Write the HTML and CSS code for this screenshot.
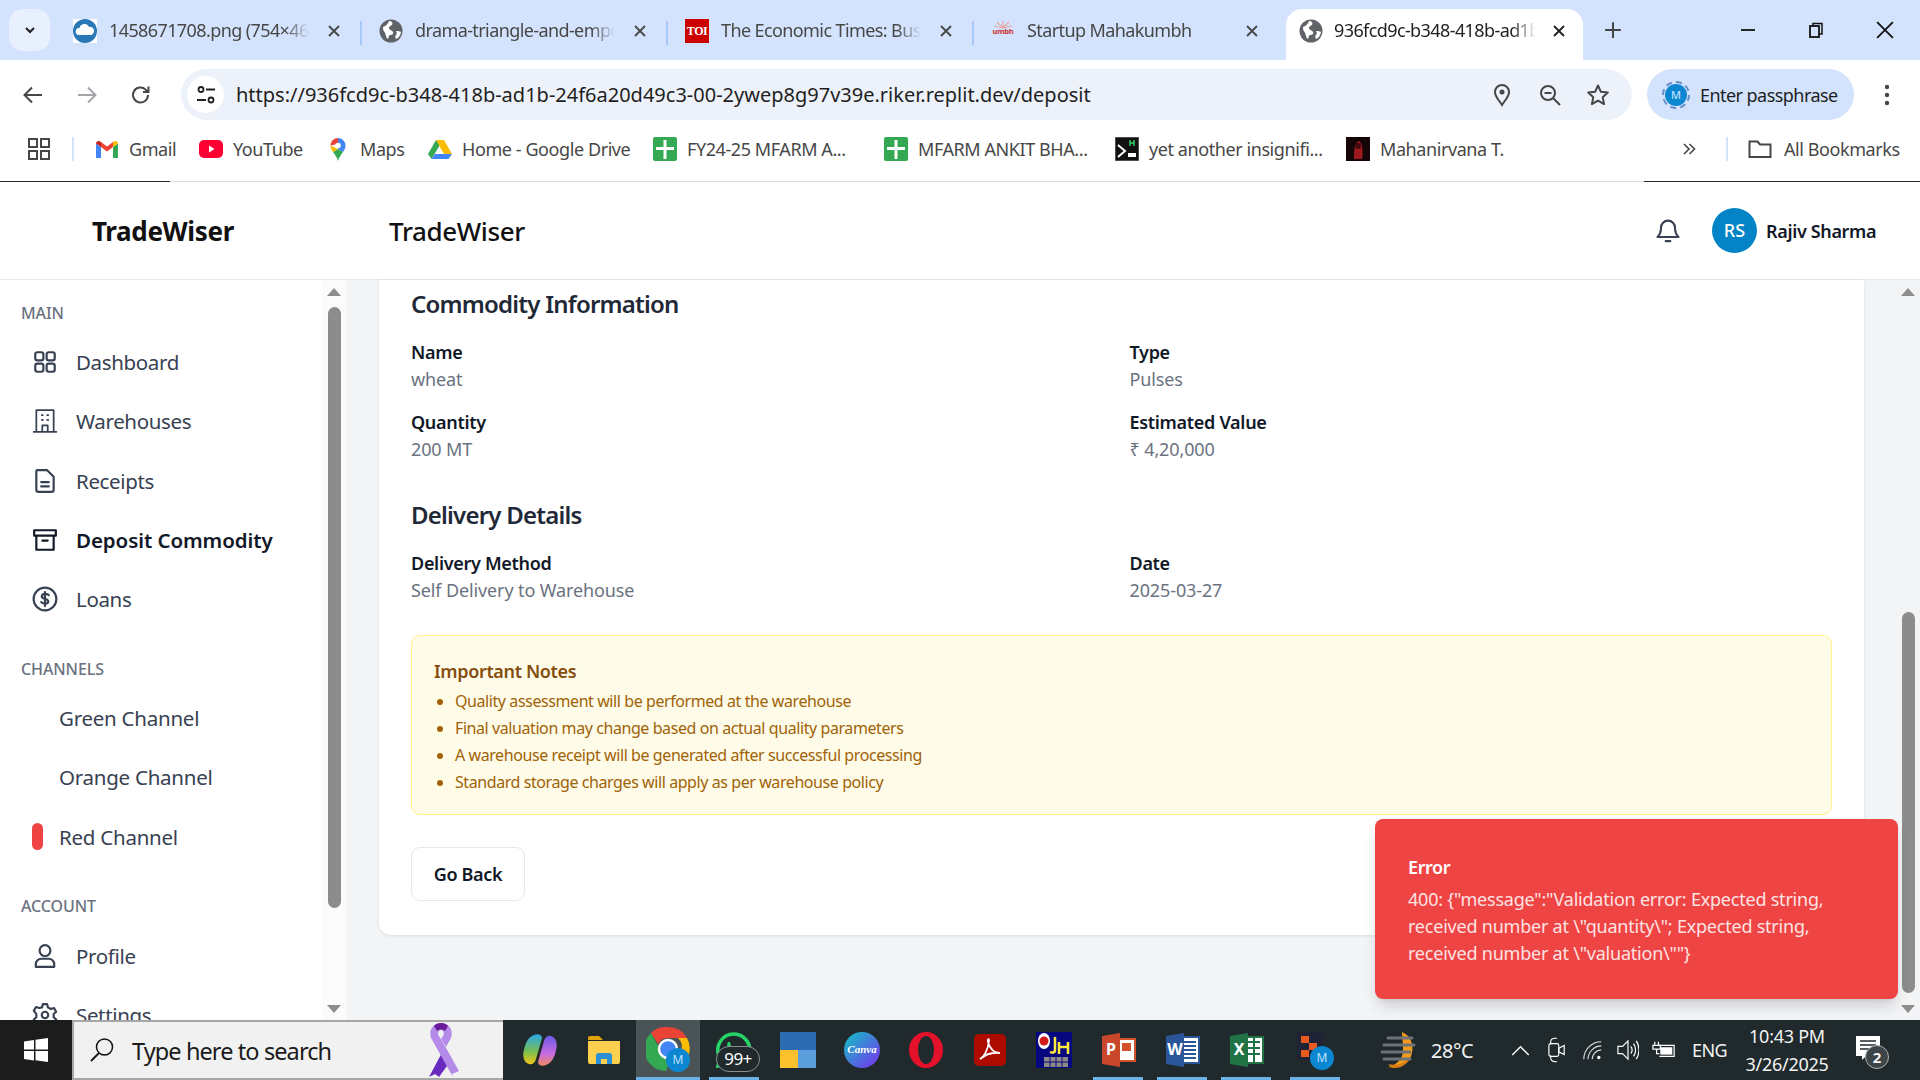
FILE: index.html
```html
<!DOCTYPE html>
<html lang="en">
<head>
<meta charset="utf-8">
<title>TradeWiser</title>
<link rel="stylesheet" href="styles.css">
</head>
<body>
<svg class="defs" aria-hidden="true">
  <symbol id="globe" viewBox="0 0 24 24"><circle cx="12" cy="12" r="11.5" fill="#5f6368"/><path fill="#fff" d="M4 8c3-1 5-3 6-6 3 0 4 2 3 4-1 1-3 1-3 3s3 2 4 4-1 3-3 3c-2 1-1 3-2 4-2-1-2-4-3-6S4 12 4 8zM17 12c2 0 4 0 5 1-.5 3-2 6-5 7-1-2-1-3 0-4s1-3 0-4z"/></symbol>
  <symbol id="x" viewBox="0 0 16 16"><path d="M3 3l10 10M13 3L3 13" fill="none" stroke="currentColor" stroke-width="1.8"/></symbol>
  <symbol id="sheet" viewBox="0 0 24 24"><rect width="24" height="24" rx="2" fill="#34a853"/><path d="M10.500 3h3v7H21v3h-7.500v9h-3v-9H3v-3h7.500z" fill="#fff"/></symbol>
</svg>

<header class="tabstrip">
  <button class="tab-menu"><svg class="ic-12" viewBox="0 0 12 12"><path d="M2 4l4 4 4-4" fill="none" stroke="#1f1f1f" stroke-width="2"/></svg></button>
  <div class="tab">
    <svg class="fav" viewBox="0 0 24 24"><rect width="24" height="24" fill="#fff"/><circle cx="12" cy="12" r="12" fill="#2a78b5"/><path d="M6 16a3.500 3.500 0 0 1 .5-7 5 5 0 0 1 9.500-1 4 4 0 0 1 2 8z" fill="#fff"/></svg>
    <span class="tab-text">1458671708.png (754×462)</span>
    <svg class="tab-x"><use href="#x"/></svg>
  </div>
  <div class="tab">
    <svg class="fav"><use href="#globe"/></svg>
    <span class="tab-text">drama-triangle-and-empowerment</span>
    <svg class="tab-x"><use href="#x"/></svg>
  </div>
  <div class="tab">
    <span class="toi">TOI</span>
    <span class="tab-text">The Economic Times: Business</span>
    <svg class="tab-x"><use href="#x"/></svg>
  </div>
  <div class="tab tab-plain">
    <svg class="fav" viewBox="0 0 24 24"><path d="M12 9V2M12 9L6 3M12 9l6-6M12 9L3 7M12 9l9-2" stroke="#e6a79f" stroke-width="1.200"/><text x="12" y="15" text-anchor="middle" class="umbh">umbh</text></svg>
    <span class="tab-text">Startup Mahakumbh</span>
    <svg class="tab-x"><use href="#x"/></svg>
  </div>
  <div class="tab tab-active">
    <svg class="fav"><use href="#globe"/></svg>
    <span class="tab-text">936fcd9c-b348-418b-ad1b-24f6a20d49c3</span>
    <svg class="tab-x"><use href="#x"/></svg>
  </div>
  <svg class="new-tab" viewBox="0 0 16 16"><path d="M8 1v14M1 8h14" stroke="#444746" stroke-width="1.800"/></svg>
  <div class="win-btns">
    <svg class="win-ic" viewBox="0 0 16 16"><path d="M1 8h14" stroke="#111" stroke-width="1.800"/></svg>
    <svg class="win-ic" viewBox="0 0 16 16"><path d="M5 4V1.500h9V12h-3" fill="none" stroke="#111" stroke-width="1.500"/><rect x="2" y="4" width="9" height="11" fill="none" stroke="#111" stroke-width="1.800"/></svg>
    <svg class="win-ic win-close" viewBox="0 0 16 16"><path d="M1 1l14 14M15 1L1 15" stroke="#111" stroke-width="1.600"/></svg>
  </div>
</header>

<nav class="toolbar">
  <div class="nav-btns">
    <svg class="tb-ic" viewBox="0 0 24 24"><path d="M21 12H4M11 4.500L3.500 12l7.500 7.500" fill="none" stroke="#444746" stroke-width="2"/></svg>
    <svg class="tb-ic" viewBox="0 0 24 24"><path d="M3 12h17M13 4.500l7.500 7.500-7.500 7.500" fill="none" stroke="#a3a5a8" stroke-width="2"/></svg>
    <svg class="tb-ic" viewBox="0 0 24 24"><path d="M19 12a7.500 7.500 0 1 1-2.300-5.400L19 9M19.500 3.500V9H14" fill="none" stroke="#444746" stroke-width="2"/></svg>
  </div>
  <div class="omnibox">
    <span class="site-btn"><svg class="ic-22" viewBox="0 0 22 22"><circle cx="6" cy="5.500" r="2.500" fill="none" stroke="#1f1f1f" stroke-width="1.800"/><path d="M11 5.500h9M2 16h9" stroke="#1f1f1f" stroke-width="1.800"/><circle cx="16" cy="16" r="2.500" fill="none" stroke="#1f1f1f" stroke-width="1.800"/></svg></span>
    <span class="url">https://936fcd9c-b348-418b-ad1b-24f6a20d49c3-00-2ywep8g97v39e.riker.replit.dev/deposit</span>
    <svg class="omni-ic" viewBox="0 0 24 24"><path d="M12 22c-3-5-7-8-7-13a7 7 0 0 1 14 0c0 5-4 8-7 13z" fill="none" stroke="#444746" stroke-width="2"/><circle cx="12" cy="9" r="2.500" fill="#444746"/></svg>
    <svg class="omni-ic" viewBox="0 0 24 24"><circle cx="10" cy="10" r="7" fill="none" stroke="#444746" stroke-width="2"/><path d="M15 15l7 7M6.500 10h7" stroke="#444746" stroke-width="2"/></svg>
    <svg class="omni-ic" viewBox="0 0 24 24"><path d="M12 2.500l2.900 6.300 6.900.8-5.100 4.700 1.400 6.800-6.100-3.400-6.100 3.400 1.400-6.800-5.100-4.700 6.900-.8z" fill="none" stroke="#444746" stroke-width="2" stroke-linejoin="round"/></svg>
  </div>
  <div class="passphrase">
    <span class="ring"><span class="avatar-m">M</span></span>
    <span>Enter passphrase</span>
  </div>
  <svg class="kebab" viewBox="0 0 6 24"><circle cx="3" cy="4" r="2.200" fill="#444746"/><circle cx="3" cy="12" r="2.200" fill="#444746"/><circle cx="3" cy="20" r="2.200" fill="#444746"/></svg>
</nav>

<div class="bookmarks">
  <svg class="apps" viewBox="0 0 22 22"><g fill="none" stroke="#444746" stroke-width="2"><rect x="1" y="1" width="8" height="8"/><rect x="13" y="1" width="8" height="8"/><rect x="1" y="13" width="8" height="8"/><rect x="13" y="13" width="8" height="8"/></g></svg>
  <span class="bm-sep"></span>
  <div class="bm-list">
    <a class="bm bm-gmail"><svg class="bm-ic" viewBox="0 0 24 24"><path fill="#4285f4" d="M1 6.500V21h5V10z"/><path fill="#34a853" d="M18 10v11h5V6.500z"/><path fill="#ea4335" d="M6 10v-5l6 4.500L18 5v5l-6 4.500z"/><path fill="#c5221f" d="M1 6.500C1 4 4 3 6 5v5z"/><path fill="#fbbc04" d="M23 6.500C23 4 20 3 18 5v5z"/></svg><span>Gmail</span></a>
    <a class="bm bm-yt"><svg class="bm-ic" viewBox="0 0 24 24"><rect y="3" width="24" height="18" rx="5" fill="#ff0033"/><path d="M10 8.500l5.500 3.500-5.500 3.500z" fill="#fff"/></svg><span>YouTube</span></a>
    <a class="bm bm-maps"><svg class="bm-ic" viewBox="0 0 24 24"><path fill="#34a853" d="M12 24c-1-4-3-6-5-9l5-3 5 3c-2 3-4 5-5 9z"/><path fill="#fbbc04" d="M7 15C5 12 4.500 11 4.500 8.500L12 12z"/><path fill="#4285f4" d="M12 1a7.500 7.500 0 0 1 7.500 7.500c0 2.500-.5 3.500-2.500 6.500l-5-3z"/><path fill="#ea4335" d="M4.500 8.500A7.500 7.500 0 0 1 12 1v6z"/><circle cx="12" cy="8.500" r="2.800" fill="#fff"/></svg><span>Maps</span></a>
    <a class="bm bm-drive"><svg class="bm-ic" viewBox="0 0 24 24"><path fill="#34a853" d="M8 3L0 17l3.500 5L12 8z"/><path fill="#fbbc04" d="M8 3h8l8 14h-8z"/><path fill="#4285f4" d="M3.500 22h17L24 17H7z"/></svg><span>Home - Google Drive</span></a>
    <a class="bm bm-long"><svg class="bm-ic"><use href="#sheet"/></svg><span>FY24-25 MFARM A...</span></a>
    <a class="bm bm-long"><svg class="bm-ic"><use href="#sheet"/></svg><span>MFARM ANKIT BHA...</span></a>
    <a class="bm bm-long"><svg class="bm-ic" viewBox="0 0 24 24"><rect width="24" height="24" fill="#111" stroke="#889" stroke-width="1"/><path d="M3 8l7 6-7 6" fill="none" stroke="#fff" stroke-width="2"/><rect x="13" y="16" width="8" height="4" fill="#fff"/><path d="M15 3v6M19 3v6M15 6h4" stroke="#3c6" stroke-width="1.500"/></svg><span>yet another insignifi...</span></a>
    <a class="bm"><svg class="bm-ic" viewBox="0 0 24 24"><rect width="24" height="24" fill="#150506"/><path d="M8 22c0-8 0-16 5-18 4 3 4 11 3 18z" fill="#9c1a1e"/><circle cx="12" cy="9" r="3" fill="#43090b"/></svg><span>Mahanirvana T.</span></a>
  </div>
  <svg class="bm-more" viewBox="0 0 14 14"><path d="M2 2l5 5-5 5M7.500 2l5 5-5 5" fill="none" stroke="#444746" stroke-width="1.600"/></svg>
  <span class="bm-sep bm-sep2"></span>
  <a class="bm bm-all"><svg class="bm-ic" viewBox="0 0 24 24"><path d="M1.500 20V4.500h8l2.500 3h10.500V20z" fill="none" stroke="#444746" stroke-width="2"/></svg><span>All Bookmarks</span></a>
</div>
<div class="chrome-line"><i></i><b></b><i></i></div>

<div class="app">
  <div class="app-header">
    <div class="brand">TradeWiser</div>
    <div class="page-brand">TradeWiser</div>
    <svg class="bell" viewBox="0 0 24 24"><path d="M6 10a6 6 0 0 1 12 0c0 5 2 7 3 8H3c1-1 3-3 3-8zM10 21.500h4" fill="none" stroke="#374151" stroke-width="1.800" stroke-linejoin="round" stroke-linecap="round"/></svg>
    <div class="avatar">RS</div>
    <div class="user">Rajiv Sharma</div>
  </div>
  <div class="app-body">
    <aside class="sidebar">
      <div class="side-scroll">
        <div class="nav-group">
          <h4 class="nav-label">MAIN</h4>
          <a class="nav-item"><svg class="nav-ic" viewBox="0 0 24 24"><rect x="3" y="3" width="7.500" height="7.500" rx="2"/><rect x="13.500" y="3" width="7.500" height="7.500" rx="2"/><rect x="3" y="13.500" width="7.500" height="7.500" rx="2"/><rect x="13.500" y="13.500" width="7.500" height="7.500" rx="2"/></svg><span>Dashboard</span></a>
          <a class="nav-item"><svg class="nav-ic nav-ic-thin" viewBox="0 0 24 24"><path d="M1.500 22h21M4 22V2h16v20M9.500 22v-6h5v6M9 6.500h1M14 6.500h1M9 11h1M14 11h1"/></svg><span>Warehouses</span></a>
          <a class="nav-item"><svg class="nav-ic" viewBox="0 0 24 24"><path d="M5 2h9l6 6v12a2 2 0 0 1-2 2H6a2 2 0 0 1-2-2V3a1 1 0 0 1 1-1zM8.500 13h7M8.500 17h7"/></svg><span>Receipts</span></a>
          <a class="nav-item nav-active"><svg class="nav-ic" viewBox="0 0 24 24"><path d="M2 3h20v5H2zM4 8v13h16V8M9.500 12.500h5"/></svg><span>Deposit Commodity</span></a>
          <a class="nav-item"><svg class="nav-ic" viewBox="0 0 24 24"><circle cx="12" cy="12" r="10.500"/><path d="M15.500 8.500c-1-1.500-6-2-6.500.8-.5 3 6.500 2 6 5.200-.4 2.500-5.500 2-6.500.3M12 5.500v13"/></svg><span>Loans</span></a>
        </div>
        <div class="nav-group">
          <h4 class="nav-label">CHANNELS</h4>
          <a class="nav-item nav-channel"><span>Green Channel</span></a>
          <a class="nav-item nav-channel"><span>Orange Channel</span></a>
          <a class="nav-item nav-channel nav-red"><span>Red Channel</span></a>
        </div>
        <div class="nav-group">
          <h4 class="nav-label">ACCOUNT</h4>
          <a class="nav-item"><svg class="nav-ic" viewBox="0 0 24 24"><circle cx="12" cy="7" r="5"/><path d="M3.500 22v-2.500c0-3 2.500-5 5-5h7c2.500 0 5 2 5 5V22z"/></svg><span>Profile</span></a>
          <a class="nav-item"><svg class="nav-ic" viewBox="0 0 24 24"><circle cx="12" cy="12" r="3"/><path d="M10 2h4l.7 3 2.600 1.500 3-.9 2 3.400-2.300 2.100v3l2.300 2.100-2 3.400-3-.9-2.600 1.500-.7 3h-4l-.7-3-2.600-1.500-3 .9-2-3.400 2.300-2.100v-3L1.700 8l2-3.400 3 .9L9.300 5z"/></svg><span>Settings</span></a>
        </div>
      </div>
      <div class="scrollbar">
        <span class="arrow-up"></span>
        <span class="thumb thumb-side"></span>
        <span class="arrow-down"></span>
      </div>
    </aside>
    <main class="main">
      <section class="card">
        <h2 class="sec-title">Commodity Information</h2>
        <div class="fields">
          <div class="field"><strong>Name</strong><span>wheat</span></div>
          <div class="field"><strong>Type</strong><span>Pulses</span></div>
          <div class="field"><strong>Quantity</strong><span>200 MT</span></div>
          <div class="field"><strong>Estimated Value</strong><span>₹ 4,20,000</span></div>
        </div>
        <h2 class="sec-title sec-second">Delivery Details</h2>
        <div class="fields">
          <div class="field"><strong>Delivery Method</strong><span>Self Delivery to Warehouse</span></div>
          <div class="field"><strong>Date</strong><span>2025-03-27</span></div>
        </div>
        <div class="notes">
          <h3>Important Notes</h3>
          <ul>
            <li>Quality assessment will be performed at the warehouse</li>
            <li>Final valuation may change based on actual quality parameters</li>
            <li>A warehouse receipt will be generated after successful processing</li>
            <li>Standard storage charges will apply as per warehouse policy</li>
          </ul>
        </div>
        <button class="back-btn">Go Back</button>
      </section>
      <div class="scrollbar scrollbar-main">
        <span class="arrow-up"></span>
        <span class="thumb thumb-main"></span>
        <span class="arrow-down"></span>
      </div>
    </main>
  </div>
  <div class="toast">
    <div class="toast-title">Error</div>
    <div class="toast-msg">400: {"message":"Validation error: Expected string, received number at \"quantity\"; Expected string, received number at \"valuation\""}</div>
  </div>
</div>

<footer class="taskbar">
  <div class="start"><svg class="win-logo" viewBox="0 0 24 24"><path fill="#fff" d="M0 3.500L10 2v9.500H0zM11.500 1.800L24 0v11.500H11.500zM0 13h10v9.500L0 21zM11.500 13H24v11l-12.500-1.800z"/></svg></div>
  <div class="search">
    <svg class="search-ic" viewBox="0 0 24 24"><circle cx="14.500" cy="9" r="8" fill="none" stroke="#111" stroke-width="1.500"/><path d="M9 15l-8 8" stroke="#111" stroke-width="1.800"/></svg>
    <span class="search-text">Type here to search</span>
    <svg class="ribbon" viewBox="0 0 40 54"><path d="M8 54L24 24l7 12-13 18-4-3z" fill="#6a2bc0"/><path d="M32 54L10 15C7 6 13 0 20 0s13 6 10 15l-5 9-5-8 2-3c2-3 0-6-2-6s-4 3-2 6l20 35-7 3z" fill="#b48be8"/><path d="M13 3c3-4 11-4 14 0l-3 5c-2-2-6-2-8 0z" fill="#6a1b9a"/></svg>
  </div>
  <div class="tb-apps">
    <span class="tb-app"><svg class="tb-ic-app" viewBox="0 0 36 36"><defs><linearGradient id="cp1" x1="0" y1="0" x2="0" y2="1"><stop offset="0" stop-color="#2aa7e8"/><stop offset=".6" stop-color="#7cc04b"/><stop offset="1" stop-color="#f5c518"/></linearGradient><linearGradient id="cp2" x1="0" y1="0" x2="0" y2="1"><stop offset="0" stop-color="#6b5be6"/><stop offset=".6" stop-color="#c86be0"/><stop offset="1" stop-color="#f08a5d"/></linearGradient></defs><path d="M12 3c4-2 8 0 8 3l-6 21c-1 4-4 6-7 5-5-1-7-8-5-14 1-6 4-13 10-15z" fill="url(#cp1)"/><path d="M24 33c-4 2-8 0-8-3l6-21c1-4 4-6 7-5 5 1 7 8 5 14-1 6-4 13-10 15z" fill="url(#cp2)"/></svg></span>
    <span class="tb-app"><svg class="tb-ic-app" viewBox="0 0 36 36"><path d="M2 6a2 2 0 0 1 2-2h9l4 4h-15z" fill="#e3a40b"/><path d="M2 9h32v21a2 2 0 0 1-2 2H4a2 2 0 0 1-2-2z" fill="#fcd04f"/><path d="M10 32v-8a3 3 0 0 1 3-3h10a3 3 0 0 1 3 3v8h-5v-5h-6v5z" fill="#2b8ed6"/></svg></span>
    <span class="tb-app tb-open tb-focus"><svg class="tb-ic-app tb-chrome" viewBox="0 0 44 44"><path d="M22 0a22 22 0 0 1 19 11H22a11 11 0 0 0-10 6L5 6a22 22 0 0 1 17-6z" fill="#ea4335"/><path d="M41 11a22 22 0 0 1-11 31l-8-12a11 11 0 0 0 10-19z" fill="#fbbc04"/><path d="M5 6l10 18a11 11 0 0 0 10 7l-5 13A22 22 0 0 1 5 6z" fill="#34a853"/><circle cx="22" cy="22" r="9" fill="#4285f4" stroke="#fff" stroke-width="2.500"/></svg><span class="app-m">M</span></span>
    <span class="tb-app tb-open tb-wa"><svg class="tb-ic-app" viewBox="0 0 36 36"><path d="M18 2a16 16 0 0 0-14 24L2 34l8-2A16 16 0 1 0 18 2z" fill="none" stroke="#25d366" stroke-width="3.500"/><path d="M12 10c-2 3 0 8 4 11s7 4 9 2l-1-3-4-1-2 1c-2-1-3-2-4-4l1-2-1-4z" fill="#25d366"/></svg><span class="wa-badge">99+</span></span>
    <span class="tb-app"><span class="blocks"><i></i><i></i><i></i></span></span>
    <span class="tb-app"><svg class="tb-ic-app" viewBox="0 0 36 36"><defs><linearGradient id="cv" x1="0" y1="0" x2="1" y2="1"><stop offset="0" stop-color="#0fc4c4"/><stop offset="1" stop-color="#7a2ff0"/></linearGradient></defs><circle cx="18" cy="18" r="18" fill="url(#cv)"/><text x="18" y="21" text-anchor="middle" class="canva-t">Canva</text></svg></span>
    <span class="tb-app"><svg class="tb-ic-app" viewBox="0 0 36 36"><ellipse cx="18" cy="18" rx="17" ry="18" fill="#e5112a"/><ellipse cx="18" cy="18" rx="8" ry="14" fill="#202a2d"/></svg></span>
    <span class="tb-app"><svg class="tb-ic-app" viewBox="0 0 36 36"><rect x="2" y="2" width="32" height="32" rx="5" fill="#ad0b00"/><path d="M8 27c4-2 8-9 9-18 .2-3-2-2-1 1 2 7 6 11 12 11-7-1-14 1-20 6z" fill="none" stroke="#fff" stroke-width="1.800"/></svg></span>
    <span class="tb-app"><svg class="tb-ic-app" viewBox="0 0 36 36"><rect width="36" height="36" fill="#07077f"/><ellipse cx="8" cy="9" rx="6" ry="8" fill="#fff"/><circle cx="8" cy="9" r="4.500" fill="#d21c1c"/><path d="M19 5v13c0 3-3 3-5 2M23 10v12M32 10v12M23 15h9" fill="none" stroke="#ffe93a" stroke-width="2.500"/><path d="M8 25h24v10H8z" fill="#8e8888"/><path d="M8 30h24M14 25v10M20 25v10M26 25v10" stroke="#07077f"/></svg></span>
    <span class="tb-app tb-open"><svg class="tb-ic-app" viewBox="0 0 36 36"><rect x="14" y="7" width="21" height="22" fill="#fff" stroke="#d2502a" stroke-width="2"/><path d="M22 11h9v8h-9z" fill="#d2502a"/><path d="M2 4l18-3v34L2 32z" fill="#c9472a"/><text x="11" y="23" text-anchor="middle" class="office-t">P</text></svg></span>
    <span class="tb-app tb-open"><svg class="tb-ic-app" viewBox="0 0 36 36"><rect x="14" y="5" width="21" height="26" fill="#fff" stroke="#2b579a" stroke-width="2"/><path d="M20 10h12M20 14h12M20 18h12M20 22h12M20 26h12" stroke="#2b579a" stroke-width="2"/><path d="M2 4l18-3v34L2 32z" fill="#2b579a"/><text x="11" y="23" text-anchor="middle" class="office-t">W</text></svg></span>
    <span class="tb-app tb-open"><svg class="tb-ic-app" viewBox="0 0 36 36"><rect x="14" y="5" width="21" height="26" fill="#fff" stroke="#217346" stroke-width="2"/><path d="M20 10h12M20 16h12M20 22h12M26 6v24" stroke="#217346" stroke-width="2"/><path d="M2 4l18-3v34L2 32z" fill="#217346"/><text x="11" y="23" text-anchor="middle" class="office-t">X</text></svg></span>
    <span class="tb-app tb-open tb-last"><svg class="tb-ic-app" viewBox="0 0 36 36"><rect x="0" y="0" width="26" height="28" fill="#1f2333"/><rect x="4" y="4" width="8" height="7" fill="#e85a20"/><rect x="12" y="11" width="8" height="7" fill="#e85a20"/><rect x="4" y="18" width="8" height="7" fill="#e85a20"/></svg><span class="app-m app-m2">M</span></span>
  </div>
  <div class="tray">
    <svg class="weather" viewBox="0 0 40 40"><path d="M22 2c8 3 12 12 10 21-2 10-12 16-24 14 8-2 14-7 15-15 .500-7-1-14-1-20z" fill="#f29b1d"/><path d="M8 34c8 2 18 0 23-8-2 7-10 13-18 12z" fill="#d97d10"/><path d="M8 8h24M4 15h30M2 22h28M4 29h26" stroke="#6f7378" stroke-width="3" stroke-linecap="round"/></svg>
    <span class="temp">28°C</span>
    <svg class="tray-chev" viewBox="0 0 20 12"><path d="M1 11l9-9 9 9" fill="none" stroke="#fff" stroke-width="1.500"/></svg>
    <svg class="tray-cam" viewBox="0 0 20 30"><path d="M3 9V6c0-3 2-4 5-4h2M3 21v3c0 3 2 4 5 4h2" fill="none" stroke="#fff" stroke-width="1.200"/><rect x="1" y="8" width="11" height="14" rx="2" fill="none" stroke="#fff" stroke-width="1.300"/><path d="M12 13l6-3v10l-6-3z" fill="none" stroke="#fff" stroke-width="1.300"/></svg>
    <svg class="tray-wifi" viewBox="0 0 24 24"><path d="M1 23c0-11 9-21 21-21M6 23c0-8 7-16 16-16M11 23c0-5 4-11 11-11" fill="none" stroke="#dfe3e6" stroke-width="1.300"/><circle cx="19" cy="21" r="2" fill="#fff"/></svg>
    <svg class="tray-vol" viewBox="0 0 24 24"><path d="M1 8h5l6-6v20l-6-6H1z" fill="none" stroke="#fff" stroke-width="1.300"/><path d="M15 8c2 2 2 6 0 8M18 5c3 4 3 10 0 14M21 2c4 6 4 14 0 20" fill="none" stroke="#fff" stroke-width="1.300"/></svg>
    <svg class="tray-bat" viewBox="0 0 26 20"><path d="M3 1v4M7 1v4M1 5h8v4H1zM5 9v5h3" fill="none" stroke="#fff" stroke-width="1.300"/><path d="M8 5h16v12H8" fill="none" stroke="#fff" stroke-width="1.300"/><rect x="9" y="7" width="13" height="8" fill="#fff"/></svg>
    <span class="lang">ENG</span>
    <div class="clock"><span>10:43 PM</span><span>3/26/2025</span></div>
    <span class="notif"><svg class="notif-ic" viewBox="0 0 24 24"><path d="M0 0h24v20H10l-4 4v-4H0z" fill="#fff"/><path d="M4 5h16M4 9h16M4 13h11" stroke="#202a2d" stroke-width="1.500"/></svg><span class="notif-badge">2</span></span>
  </div>
</footer>
</body>
</html>
```
FILE: styles.css
```css
* { box-sizing: border-box; }
html, body { margin: 0; height: 100%; }
body {
  width: 1920px; height: 1080px; overflow: hidden; position: relative;
  display: flex; flex-direction: column;
  font-family: "Noto Sans", "Open Sans", sans-serif;
  color: #111827; background: #fff;
}
.defs { display: none; }
h2, h3, h4, ul { margin: 0; padding: 0; }
a { color: inherit; text-decoration: none; }
button { font: inherit; }

/* tab strip */
.tabstrip { height: 60px; flex: none; background: #d3e3fd; display: flex; align-items: flex-start; padding-left: 9px; position: relative; }
.tab-menu { width: 41px; height: 42px; margin-top: 9px; margin-right: 7px; background: #e9f0fd; border: 0; border-radius: 14px; display: flex; align-items: center; justify-content: center; padding: 0; }
.ic-12 { width: 12px; height: 12px; }
.tab { width: 306px; height: 51px; margin-top: 9px; padding: 0 0 8px 16px; display: flex; align-items: center; position: relative; font-size: 18px; letter-spacing: -.6px; color: #474747; border-right: 2px solid transparent; }
.tab::after { content: ""; position: absolute; right: -1px; top: 12px; height: 24px; width: 2px; background: #a8c7fa; }
.tab-plain::after, .tab-active::after { display: none; }
.fav { width: 24px; height: 24px; flex: none; }
.umbh { font: 700 7.500px "Noto Sans", sans-serif; fill: #c9302c; letter-spacing: -.2px; }
.toi { width: 24px; height: 24px; flex: none; background: #c00; color: #fff; font: bold 12px/24px "Liberation Serif", serif; text-align: center; letter-spacing: -.5px; }
.tab-text { width: 200px; margin-left: 12px; height: 25px; line-height: 25px; white-space: nowrap; overflow: hidden; -webkit-mask-image: linear-gradient(to right, #000 88%, transparent); mask-image: linear-gradient(to right, #000 88%, transparent); }
.tab-x { width: 16px; height: 16px; color: #444746; margin-left: 17px; flex: none; }
.tab-active { background: #fff; border-radius: 16px 16px 0 0; color: #1f1f1f; margin-left: 5px; width: 297px; padding-left: 13px; }
.tab-active .tab-x { color: #1f1f1f; margin-left: 15px; }
.tab-active .tab-text { width: 202px; margin-left: 11px; }
.new-tab { width: 18px; height: 18px; margin: 21px 0 0 21px; }
.win-btns { margin-left: auto; display: flex; align-items: center; height: 60px; padding-right: 26px; gap: 52px; }
.win-ic { width: 16px; height: 18px; margin-top: -1px; }
.win-close { width: 18px; }

/* toolbar */
.toolbar { height: 60px; flex: none; background: #fff; display: flex; align-items: flex-start; border-radius: 12px 12px 0 0; padding-top: 9px; position: relative; }
.nav-btns { width: 181px; height: 51px; padding-left: 21px; display: flex; align-items: center; gap: 30px; }
.tb-ic { width: 24px; height: 24px; flex: none; }
.omnibox { width: 1451px; height: 51px; background: #edf2fa; border-radius: 26px; display: flex; align-items: center; padding-left: 6px; padding-right: 22px; }
.site-btn { width: 37px; height: 37px; border-radius: 50%; background: #fff; display: flex; align-items: center; justify-content: center; flex: none; }
.ic-22 { width: 22px; height: 22px; }
.url { margin-left: 12px; font-size: 20px; letter-spacing: 0; color: #1f1f1f; white-space: nowrap; flex: 1; }
.omni-ic { width: 24px; height: 24px; margin-left: 24px; flex: none; }
.passphrase { width: 207px; height: 51px; margin-left: 15px; background: #d3e3fd; border-radius: 26px; display: flex; align-items: center; padding-left: 15px; gap: 10px; font-size: 18px; letter-spacing: -.55px; color: #1f1f1f; }
.ring { width: 28px; height: 28px; border-radius: 50%; border: 2px dashed #6a8fc7; display: flex; align-items: center; justify-content: center; flex: none; }
.avatar-m { width: 22px; height: 22px; border-radius: 50%; background: #0b87d1; color: #cfe8ff; font-size: 11px; line-height: 22px; text-align: center; letter-spacing: 0; }
.kebab { width: 6px; height: 24px; margin: 14px 0 0 30px; }

/* bookmarks */
.bookmarks { height: 61px; flex: none; background: #fff; display: flex; align-items: center; padding: 0 0 3px 28px; font-size: 18px; letter-spacing: -.42px; color: #474747; }
.apps { width: 22px; height: 22px; flex: none; }
.bm-sep { width: 2px; height: 24px; background: #d3e3fd; margin-left: 22px; flex: none; }
.bm-list { display: flex; margin-left: 21px; width: 1400px; }
.bm { display: flex; align-items: center; gap: 10px; white-space: nowrap; flex: none; }
.bm-ic { width: 24px; height: 24px; flex: none; }
.bm-gmail { width: 104px; }
.bm-yt { width: 127px; }
.bm-maps { width: 102px; }
.bm-drive { width: 225px; }
.bm-long { width: 231px; }
.bm-more { width: 14px; height: 14px; margin-left: 187px; flex: none; }
.bm-sep2 { margin-left: 30px; }
.bm-all { margin-left: 20px; gap: 12px; }
.chrome-line { height: 1px; flex: none; display: flex; background: #dcdcdc; justify-content: space-between; }
.chrome-line i { height: 1px; background: #2a2a2a; width: 170px; }
.chrome-line i:last-child { width: 276px; }
.chrome-line b { flex: 1; }

/* app */
.app { flex: 1; min-height: 0; display: flex; flex-direction: column; position: relative; overflow: hidden; }
.app-header { height: 98px; flex: none; background: #fff; border-bottom: 1px solid #e5e7eb; display: flex; align-items: center; }
.brand { width: 389px; padding-left: 92px; font-size: 26px; font-weight: 700; letter-spacing: -.35px; color: #111; }
.page-brand { font-size: 26px; font-weight: 500; letter-spacing: -.4px; color: #111; }
.bell { width: 28px; height: 28px; margin-left: auto; margin-top: -2px; }
.avatar { width: 45px; height: 45px; border-radius: 50%; background: #0284c7; color: #fff; font-size: 18px; line-height: 45px; text-align: center; margin-left: 30px; font-weight: 500; }
.user { margin-left: 9px; width: 154px; font-size: 18px; font-weight: 600; letter-spacing: -.35px; color: #111827; }
.app-body { flex: 1; min-height: 0; display: flex; }
.sidebar { width: 346px; flex: none; display: flex; background: #fff; overflow: hidden; }
.side-scroll { width: 323px; flex: none; padding-top: 23px; overflow: hidden; }
.nav-group { margin-bottom: 30px; }
.nav-label { height: 20px; line-height: 20px; font-size: 16px; font-weight: 500; letter-spacing: -.1px; color: #6b7280; padding-left: 21px; margin-bottom: 9.500px; }
.nav-item { height: 59.300px; display: flex; align-items: center; padding-left: 32px; gap: 18px; font-size: 20.500px; letter-spacing: -.35px; color: #374151; }
.nav-ic { width: 26px; height: 26px; flex: none; fill: none; stroke: #374151; stroke-width: 2; stroke-linejoin: round; stroke-linecap: round; }
.nav-ic-thin { stroke-width: 1.600; }
.nav-active { font-weight: 600; letter-spacing: -.08px; color: #111827; }
.nav-active .nav-ic { stroke: #111827; }
.nav-channel { padding-left: 59px; letter-spacing: -.25px; }
.nav-red { position: relative; }
.nav-red::before { content: ""; position: absolute; left: 32px; top: 16px; width: 11px; height: 27px; border-radius: 6px; background: #ef4444; }

.scrollbar { width: 23px; flex: none; background: #fbfbfb; position: relative; }
.arrow-up, .arrow-down { position: absolute; left: 4px; width: 0; height: 0; border-left: 7.500px solid transparent; border-right: 7.500px solid transparent; }
.arrow-up { top: 8px; border-bottom: 8px solid #8d8d8d; }
.arrow-down { border-top: 8px solid #8d8d8d; }
.thumb { position: absolute; left: 5px; width: 13px; border-radius: 7px; background: #8c8c8c; }
.thumb-side { top: 27px; height: 601px; }
.sidebar .arrow-down { top: 725px; }
.thumb-main { top: 332px; height: 381px; }
.scrollbar-main .arrow-down { top: 725px; }

.main { flex: 1; min-width: 0; background: #f3f4f6; display: flex; padding-left: 33px; align-items: flex-start; height: 100%; justify-content: space-between; }
.card { width: 1485px; height: 655px; background: #fff; border-radius: 0 0 12px 12px; padding: 7.500px 32px 0; box-shadow: 0 1px 3px rgba(0,0,0,.1); }
.sec-title { height: 32px; line-height: 32px; font-size: 24px; font-weight: 600; letter-spacing: -.78px; color: #1f2937; margin-bottom: 19px; }
.sec-second { margin-top: 36px; }
.fields { display: grid; grid-template-columns: 718.500px 1fr; row-gap: 16px; }
.field { display: flex; flex-direction: column; font-size: 18px; line-height: 27px; letter-spacing: -.3px; }
.field strong { font-weight: 600; color: #111827; }
.field span { color: #6b7280; letter-spacing: -.12px; }
.notes { margin-top: 31px; height: 180px; background: #fefce8; border: 1px solid #fef08a; border-radius: 9px; padding: 22.500px 22px 0; }
.notes h3 { font-size: 18px; line-height: 27px; font-weight: 600; letter-spacing: -.35px; color: #854d0e; margin-bottom: 3px; }
.notes ul { padding-left: 21px; list-style: disc; }
.notes li { font-size: 16px; line-height: 27px; letter-spacing: -.42px; color: #a16207; }
.back-btn { margin-top: 32px; width: 114px; height: 54px; background: #fff; border: 1px solid #e5e7eb; border-radius: 9px; font-size: 18px; font-weight: 600; letter-spacing: -.35px; color: #111827; padding: 0; }

.toast { position: absolute; left: 1375px; top: 637px; width: 523px; height: 180px; background: #ef4444; border-radius: 8px; padding: 35px 33px 0; box-shadow: 0 10px 15px -3px rgba(0,0,0,.15), 0 4px 6px -4px rgba(0,0,0,.1); color: #fff; }
.toast-title { font-size: 18px; line-height: 27px; font-weight: 600; letter-spacing: -.4px; }
.toast-msg { font-size: 18px; line-height: 27px; letter-spacing: -.22px; color: #fde3e3; margin-top: 5px; }

/* taskbar */
.taskbar { height: 60px; flex: none; background: #202a2d; display: flex; align-items: stretch; color: #fff; position: relative; z-index: 2; }
.start { width: 72px; flex: none; background: #1c1c1c; display: flex; align-items: center; justify-content: center; }
.win-logo { width: 24px; height: 24px; }
.search { width: 431px; flex: none; background: #f1f1f1; border: 2px solid #a7a7a7; border-width: 2px 0 2px 2px; display: flex; align-items: center; padding-left: 16px; position: relative; color: #1b1b1b; }
.search-ic { width: 24px; height: 24px; flex: none; }
.search-text { margin-left: 18px; margin-top: 2px; font-size: 23.500px; letter-spacing: -.9px; }
.ribbon { position: absolute; left: 347px; top: 1px; width: 40px; height: 54px; }
.tb-apps { display: flex; width: 832px; padding-left: 5px; flex: none; }
.tb-app { width: 64px; height: 60px; flex: none; position: relative; display: flex; align-items: center; justify-content: center; }
.tb-ic-app { width: 36px; height: 36px; }
.tb-open::after { content: ""; position: absolute; left: 7px; right: 7px; bottom: 0; height: 3px; background: #6cb2e8; }
.tb-focus { background: #4a5456; }
.tb-focus::after { left: 0; right: 0; }
.tb-chrome { width: 44px; height: 44px; margin: -2px 0 0 0; }
.app-m { position: absolute; left: 30px; top: 28px; width: 24px; height: 24px; border-radius: 50%; background: #0b87d1; color: #bfe0fa; font-size: 12px; line-height: 24px; text-align: center; }
.app-m2 { left: 27px; top: 26px; }
.tb-wa { margin-left: 2px; }
.tb-last { margin-left: 5px; }
.wa-badge { position: absolute; left: 14px; top: 26px; width: 44px; height: 26px; background: #202a2d; border: 1px solid #8a8f90; border-radius: 13px; font-size: 17px; line-height: 23px; text-align: center; color: #fff; letter-spacing: -.5px; }
.blocks { width: 36px; height: 36px; display: grid; grid-template-columns: 1fr 1fr; grid-template-rows: 1fr 1fr; }
.blocks i:first-child { grid-column: 1 / 3; background: #2d6cb3; }
.blocks i:nth-child(2) { background: #fdc12e; }
.blocks i:nth-child(3) { background: #5a9fdc; }
.canva-t { font: italic 600 11px "Liberation Serif", serif; fill: #fff; }
.office-t { font: 700 16px "Noto Sans", sans-serif; fill: #fff; }

.tray { flex: 1; display: flex; align-items: center; position: relative; padding-left: 45px; font-size: 18px; color: #f3f3f3; }
.weather { width: 40px; height: 40px; flex: none; }
.temp { margin-left: 11px; width: 44px; font-size: 20px; letter-spacing: -.5px; }
.tray-chev { width: 19px; height: 11px; margin-left: 36px; }
.tray-cam { width: 18px; height: 28px; margin-left: 18px; }
.tray-wifi { width: 20px; height: 22px; margin-left: 17px; }
.tray-vol { width: 22px; height: 24px; margin-left: 14px; }
.tray-bat { width: 24px; height: 20px; margin-left: 13px; }
.lang { margin-left: 16px; width: 36px; font-size: 18px; letter-spacing: -.6px; }
.clock { width: 100px; margin-left: 9px; display: flex; flex-direction: column; align-items: center; font-size: 18px; line-height: 28px; letter-spacing: -.25px; }
.notif { margin-left: 16px; width: 40px; height: 40px; position: relative; }
.notif-ic { position: absolute; left: 3px; top: 6px; width: 24px; height: 24px; }
.notif-badge { position: absolute; left: 12px; top: 15px; width: 24px; height: 24px; border-radius: 50%; background: #3d4548; border: 1px solid #b0b4b5; font-size: 15px; font-weight: 700; line-height: 22px; text-align: center; }
```
